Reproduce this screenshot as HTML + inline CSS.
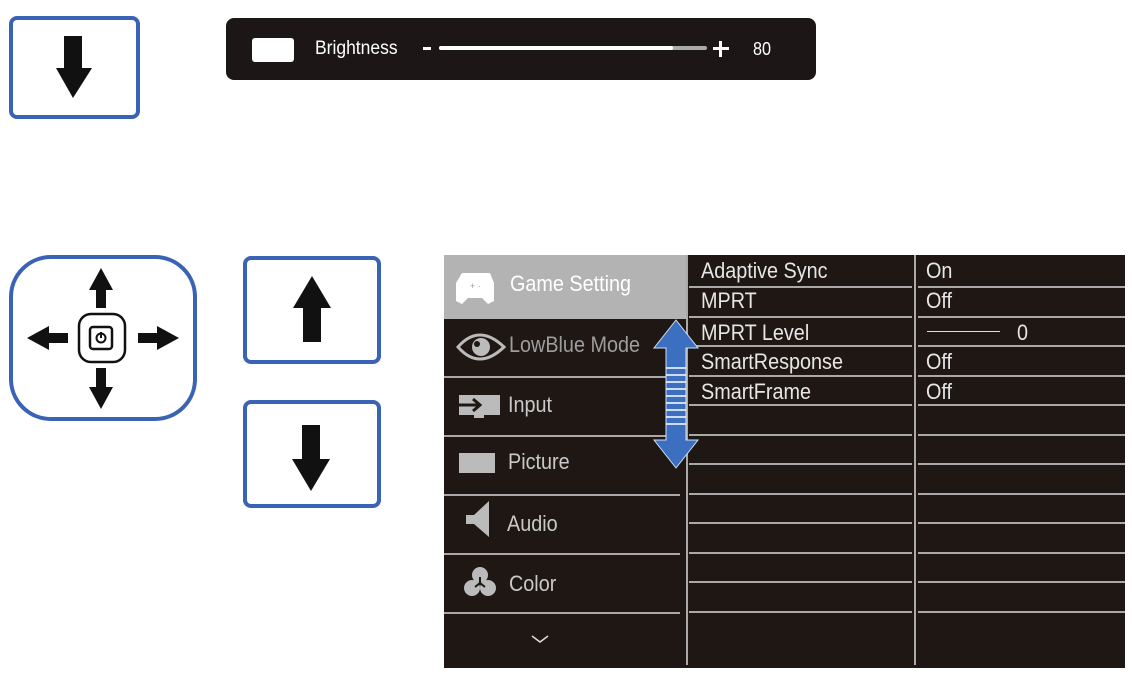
<!DOCTYPE html>
<html><head><meta charset="utf-8"><style>
body{margin:0;width:1132px;height:678px;background:#fff;position:relative;overflow:hidden;font-family:"Liberation Sans",sans-serif;}
.a{position:absolute}
.box{position:absolute;border:4px solid #3a62b5;border-radius:8px;box-sizing:border-box;background:#fff}
.t{position:absolute;color:#e6e6e6;font-size:22px;line-height:1;white-space:nowrap;transform:scaleX(0.9);transform-origin:left}
.m{position:absolute;color:#c9c9c9;font-size:22px;line-height:1;white-space:nowrap;left:508px;transform:scaleX(0.9);transform-origin:left}
.h{position:absolute;height:2px;background:#a9a9a9}
</style></head><body>
<div class="box" style="left:9px;top:16px;width:131px;height:103px"></div>
<svg class="a" style="left:0;top:0" width="200" height="130"><polygon points="64,36 82,36 82,68 92,68 73,98 56,68 64,68" fill="#111"/></svg>

<div class="a" style="left:226px;top:18px;width:590px;height:62px;background:#1c1716;border-radius:8px"></div>
<div class="a" style="left:252px;top:38px;width:42px;height:24px;background:#fff;border-radius:3px"></div>
<div class="t" style="left:315px;top:39px;font-size:19px;color:#fff;transform:scaleX(0.92)">Brightness</div>
<div class="a" style="left:423px;top:47px;width:8px;height:3px;background:#fff"></div>
<div class="a" style="left:439px;top:46px;width:268px;height:4px;background:#aaa;border-radius:2px"></div>
<div class="a" style="left:439px;top:46px;width:234px;height:4px;background:#fff;border-radius:2px"></div>
<div class="a" style="left:713px;top:47px;width:16px;height:3px;background:#fff"></div>
<div class="a" style="left:719px;top:41px;width:3px;height:16px;background:#fff"></div>
<div class="t" style="left:753px;top:40px;font-size:18px;color:#fff">80</div>

<div class="box" style="left:9px;top:255px;width:188px;height:166px;border-radius:42px"></div>
<svg class="a" style="left:0;top:250px" width="400" height="270">
<polygon points="101,18 113,40 106,40 106,58 96,58 96,40 89,40" fill="#111"/>
<polygon points="101,159 113,137 106,137 106,118 96,118 96,137 89,137" fill="#111"/>
<polygon points="27,88 49,76 49,83 68,83 68,93 49,93 49,100" fill="#111"/>
<polygon points="179,88 157,76 157,83 138,83 138,93 157,93 157,100" fill="#111"/>
<rect x="79" y="64" width="46" height="48" rx="12" fill="none" stroke="#111" stroke-width="2.5"/>
<rect x="90" y="77" width="22" height="22" rx="3" fill="none" stroke="#111" stroke-width="2.5"/>
<circle cx="101" cy="88" r="4.5" fill="none" stroke="#111" stroke-width="2"/><line x1="101" y1="82" x2="101" y2="88" stroke="#111" stroke-width="2"/>
</svg>
<div class="box" style="left:243px;top:256px;width:138px;height:108px"></div>
<div class="box" style="left:243px;top:400px;width:138px;height:108px"></div>
<svg class="a" style="left:0;top:250px" width="400" height="270">
<polygon points="312,26 331,58 321,58 321,92 303,92 303,58 293,58" fill="#111"/>
<polygon points="311,241 330,209 320,209 320,175 302,175 302,209 292,209" fill="#111"/>
</svg>

<div class="a" style="left:444px;top:255px;width:681px;height:413px;background:#1e1714"></div>
<div class="a" style="left:444px;top:255px;width:242px;height:64px;background:#b3b3b3"></div>
<div class="a" style="left:686px;top:255px;width:2px;height:410px;background:#a9a9a9"></div>
<div class="a" style="left:914px;top:255px;width:2px;height:410px;background:#a9a9a9"></div>
<div class="h" style="left:444px;top:376px;width:236px"></div>
<div class="h" style="left:444px;top:435px;width:236px"></div>
<div class="h" style="left:444px;top:494px;width:236px"></div>
<div class="h" style="left:444px;top:553px;width:236px"></div>
<div class="h" style="left:444px;top:612px;width:236px"></div>
<div class="h" style="left:689px;top:286px;width:223px"></div><div class="h" style="left:918px;top:286px;width:207px"></div>
<div class="h" style="left:689px;top:316px;width:223px"></div><div class="h" style="left:918px;top:316px;width:207px"></div>
<div class="h" style="left:689px;top:345px;width:223px"></div><div class="h" style="left:918px;top:345px;width:207px"></div>
<div class="h" style="left:689px;top:375px;width:223px"></div><div class="h" style="left:918px;top:375px;width:207px"></div>
<div class="h" style="left:689px;top:404px;width:223px"></div><div class="h" style="left:918px;top:404px;width:207px"></div>
<div class="h" style="left:689px;top:434px;width:223px"></div><div class="h" style="left:918px;top:434px;width:207px"></div>
<div class="h" style="left:689px;top:463px;width:223px"></div><div class="h" style="left:918px;top:463px;width:207px"></div>
<div class="h" style="left:689px;top:493px;width:223px"></div><div class="h" style="left:918px;top:493px;width:207px"></div>
<div class="h" style="left:689px;top:522px;width:223px"></div><div class="h" style="left:918px;top:522px;width:207px"></div>
<div class="h" style="left:689px;top:552px;width:223px"></div><div class="h" style="left:918px;top:552px;width:207px"></div>
<div class="h" style="left:689px;top:581px;width:223px"></div><div class="h" style="left:918px;top:581px;width:207px"></div>
<div class="h" style="left:689px;top:611px;width:223px"></div><div class="h" style="left:918px;top:611px;width:207px"></div>

<div class="t" style="left:701px;top:260px">Adaptive Sync</div><div class="t" style="left:926px;top:260px">On</div>
<div class="t" style="left:701px;top:290px">MPRT</div><div class="t" style="left:926px;top:290px">Off</div>
<div class="t" style="left:701px;top:322px">MPRT Level</div><div class="a" style="left:927px;top:331px;width:73px;height:1px;background:#ddd"></div><div class="t" style="left:1017px;top:322px">0</div>
<div class="t" style="left:701px;top:351px">SmartResponse</div><div class="t" style="left:926px;top:351px">Off</div>
<div class="t" style="left:701px;top:381px">SmartFrame</div><div class="t" style="left:926px;top:381px">Off</div>

<div class="m" style="left:510px;top:273px;color:#fff">Game Setting</div>
<div class="m" style="left:509px;top:334px;color:#9d9d9d">LowBlue Mode</div>
<div class="m" style="top:394px">Input</div>
<div class="m" style="top:451px">Picture</div>
<div class="m" style="left:507px;top:513px">Audio</div>
<div class="m" style="left:509px;top:573px">Color</div>

<svg class="a" style="left:440px;top:250px" width="260" height="420">
<path d="M22,23 h28 l4,10 v18 l-6,3 l-6,-6 h-14 l-6,6 l-6,-3 v-18 z" fill="#fff"/>
<text x="30" y="39" font-size="9" fill="#999">+ ·</text>
<path d="M18,97 q21,-24 46,0 q-25,24 -46,0z" fill="none" stroke="#bbb" stroke-width="3"/>
<circle cx="41" cy="97" r="9" fill="#bbb"/><circle cx="37" cy="94" r="3" fill="#1e1714"/>
<rect x="19" y="145" width="41" height="20" fill="#bbb"/><rect x="34" y="165" width="10" height="3" fill="#bbb"/>
<path d="M17,155 h22 M33,149 l7,6 l-7,6" stroke="#1e1714" stroke-width="3" fill="none"/>
<rect x="19" y="203" width="36" height="20" fill="#bbb"/>
<path d="M26,265 h8 l15,-14 v36 l-15,-13 h-8z" fill="#bbb"/>
<circle cx="40" cy="325" r="8" fill="#bbb"/><circle cx="32" cy="338" r="8" fill="#bbb"/><circle cx="48" cy="338" r="8" fill="#bbb"/>
<path d="M40,333 v-6 M40,333 l-5,4 M40,333 l5,4" stroke="#1e1714" stroke-width="2"/>
<path d="M92,386 l8,6 l8,-6" stroke="#ddd" stroke-width="1.5" fill="none"/>
<polygon points="236,70 258,98 246,98 246,190 258,190 236,218 214,190 226,190 226,98 214,98" fill="#3c6fc0" stroke="#cfe0f5" stroke-width="1"/>
<g stroke="#fff" stroke-width="1.5"><line x1="226" y1="118" x2="246" y2="118"/><line x1="226" y1="125" x2="246" y2="125"/><line x1="226" y1="132" x2="246" y2="132"/><line x1="226" y1="139" x2="246" y2="139"/><line x1="226" y1="146" x2="246" y2="146"/><line x1="226" y1="153" x2="246" y2="153"/><line x1="226" y1="160" x2="246" y2="160"/><line x1="226" y1="167" x2="246" y2="167"/><line x1="226" y1="174" x2="246" y2="174"/></g>
</svg>
</body></html>
